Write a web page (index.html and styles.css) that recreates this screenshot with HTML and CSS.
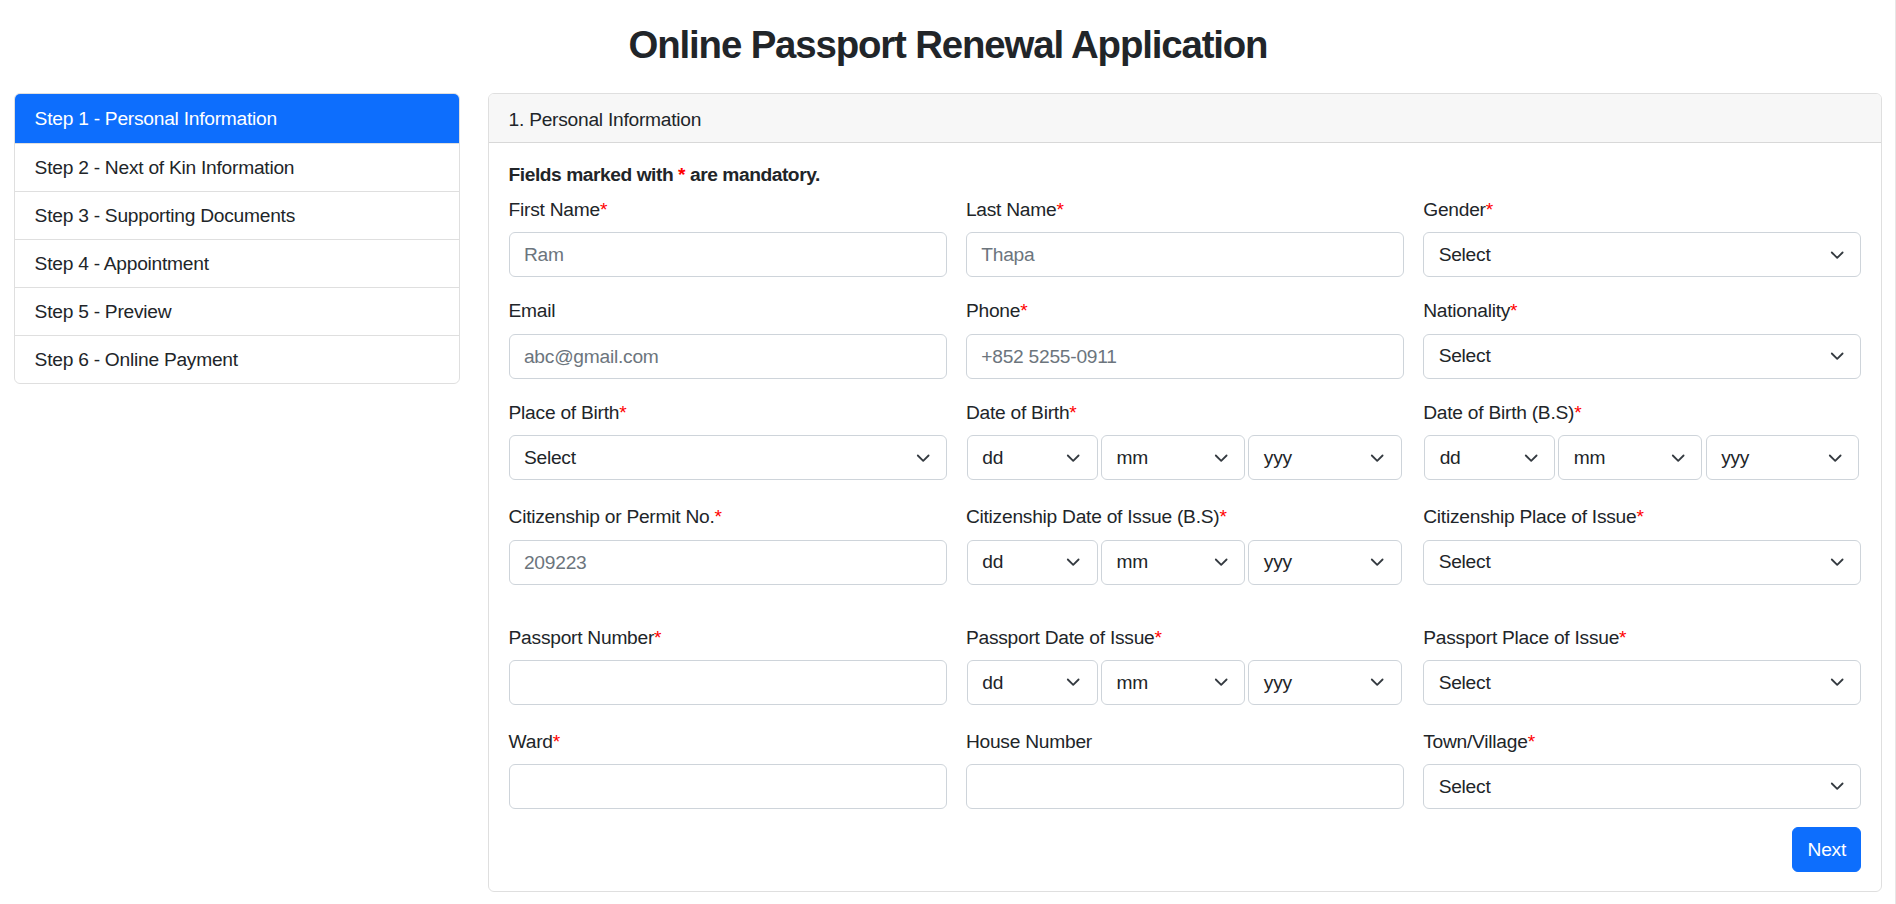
FILE: index.html
```html
<!DOCTYPE html>
<html lang="en">
<head>
<meta charset="utf-8">
<title>Online Passport Renewal Application</title>
<link rel="stylesheet" href="styles.css">
</head>
<body>
<h1 class="page-title">Online Passport Renewal Application</h1>
<div class="layout">
  <aside class="steps">
    <div class="step active">Step 1 - Personal Information</div>
    <div class="step">Step 2 - Next of Kin Information</div>
    <div class="step">Step 3 - Supporting Documents</div>
    <div class="step">Step 4 - Appointment</div>
    <div class="step">Step 5 - Preview</div>
    <div class="step">Step 6 - Online Payment</div>
  </aside>
  <main class="card">
    <div class="card-header">1. Personal Information</div>
    <div class="card-body">
      <p class="note">Fields marked with <span class="req">*</span> are mandatory.</p>

      <div class="form-row">
        <div class="field"><label>First Name<span class="req">*</span></label><input class="control" placeholder="Ram"></div>
        <div class="field"><label>Last Name<span class="req">*</span></label><input class="control" placeholder="Thapa"></div>
        <div class="field"><label>Gender<span class="req">*</span></label>
          <div class="select"><span>Select</span><svg class="chev" viewBox="0 0 16 16"><path d="M2 5l6 6 6-6"/></svg></div>
        </div>
      </div>

      <div class="form-row row2">
        <div class="field"><label>Email</label><input class="control" placeholder="abc@gmail.com"></div>
        <div class="field"><label>Phone<span class="req">*</span></label><input class="control" placeholder="+852 5255-0911"></div>
        <div class="field"><label>Nationality<span class="req">*</span></label>
          <div class="select"><span>Select</span><svg class="chev" viewBox="0 0 16 16"><path d="M2 5l6 6 6-6"/></svg></div>
        </div>
      </div>

      <div class="form-row row3">
        <div class="field"><label>Place of Birth<span class="req">*</span></label>
          <div class="select"><span>Select</span><svg class="chev" viewBox="0 0 16 16"><path d="M2 5l6 6 6-6"/></svg></div>
        </div>
        <div class="field"><label>Date of Birth<span class="req">*</span></label>
          <div class="date-group">
            <div class="select dd"><span>dd</span><svg class="chev" viewBox="0 0 16 16"><path d="M2 5l6 6 6-6"/></svg></div>
            <div class="select mm"><span>mm</span><svg class="chev" viewBox="0 0 16 16"><path d="M2 5l6 6 6-6"/></svg></div>
            <div class="select yy"><span>yyy</span><svg class="chev" viewBox="0 0 16 16"><path d="M2 5l6 6 6-6"/></svg></div>
          </div>
        </div>
        <div class="field"><label>Date of Birth (B.S)<span class="req">*</span></label>
          <div class="date-group">
            <div class="select dd"><span>dd</span><svg class="chev" viewBox="0 0 16 16"><path d="M2 5l6 6 6-6"/></svg></div>
            <div class="select mm"><span>mm</span><svg class="chev" viewBox="0 0 16 16"><path d="M2 5l6 6 6-6"/></svg></div>
            <div class="select yy"><span>yyy</span><svg class="chev" viewBox="0 0 16 16"><path d="M2 5l6 6 6-6"/></svg></div>
          </div>
        </div>
      </div>

      <div class="form-row row4">
        <div class="field"><label>Citizenship or Permit No.<span class="req">*</span></label><input class="control" placeholder="209223"></div>
        <div class="field"><label>Citizenship Date of Issue (B.S)<span class="req">*</span></label>
          <div class="date-group">
            <div class="select dd"><span>dd</span><svg class="chev" viewBox="0 0 16 16"><path d="M2 5l6 6 6-6"/></svg></div>
            <div class="select mm"><span>mm</span><svg class="chev" viewBox="0 0 16 16"><path d="M2 5l6 6 6-6"/></svg></div>
            <div class="select yy"><span>yyy</span><svg class="chev" viewBox="0 0 16 16"><path d="M2 5l6 6 6-6"/></svg></div>
          </div>
        </div>
        <div class="field"><label>Citizenship Place of Issue<span class="req">*</span></label>
          <div class="select"><span>Select</span><svg class="chev" viewBox="0 0 16 16"><path d="M2 5l6 6 6-6"/></svg></div>
        </div>
      </div>

      <div class="form-row row5">
        <div class="field"><label>Passport Number<span class="req">*</span></label><input class="control"></div>
        <div class="field"><label>Passport Date of Issue<span class="req">*</span></label>
          <div class="date-group">
            <div class="select dd"><span>dd</span><svg class="chev" viewBox="0 0 16 16"><path d="M2 5l6 6 6-6"/></svg></div>
            <div class="select mm"><span>mm</span><svg class="chev" viewBox="0 0 16 16"><path d="M2 5l6 6 6-6"/></svg></div>
            <div class="select yy"><span>yyy</span><svg class="chev" viewBox="0 0 16 16"><path d="M2 5l6 6 6-6"/></svg></div>
          </div>
        </div>
        <div class="field"><label>Passport Place of Issue<span class="req">*</span></label>
          <div class="select"><span>Select</span><svg class="chev" viewBox="0 0 16 16"><path d="M2 5l6 6 6-6"/></svg></div>
        </div>
      </div>

      <div class="form-row row6">
        <div class="field"><label>Ward<span class="req">*</span></label><input class="control"></div>
        <div class="field"><label>House Number</label><input class="control"></div>
        <div class="field"><label>Town/Village<span class="req">*</span></label>
          <div class="select"><span>Select</span><svg class="chev" viewBox="0 0 16 16"><path d="M2 5l6 6 6-6"/></svg></div>
        </div>
      </div>

      <div class="actions"><button class="btn-next" type="button">Next</button></div>
    </div>
  </main>
</div>
</body>
</html>
```

FILE: styles.css
```css
* { box-sizing: border-box; }

html, body { margin: 0; padding: 0; }

body {
  font-family: "Liberation Sans", Arial, sans-serif;
  font-size: 19.2px;
  line-height: 28.8px;
  color: #212529;
  background: #fff;
  letter-spacing: -0.25px;
  min-height: 100vh;
  box-shadow: inset -1px 0 0 #e6e6e6;
}

.page-title {
  margin: 22.9px 0 27.2px;
  font-size: 38.4px;
  line-height: 43.2px;
  font-weight: 700;
  letter-spacing: -1.15px;
  text-align: center;
}

.layout {
  display: flex;
  align-items: flex-start;
  gap: 28.8px;
  padding: 0 14.4px;
}

/* sidebar steps */
.steps {
  flex: 0 0 445.2px;
  border: 1px solid rgba(0, 0, 0, 0.125);
  border-radius: 6px;
  overflow: hidden;
  display: flex;
  flex-direction: column;
}

.step {
  padding: 10.3px 19.2px 8px;
  border-top: 1px solid rgba(0, 0, 0, 0.125);
  white-space: nowrap;
}

.step.active {
  margin: -1px -1px 0;
  padding: 11.6px 20.2px 9px;
  border-top: 0;
  background: #0d6efd;
  color: #fff;
  border-radius: 6px 6px 0 0;
}

/* card */
.card {
  flex: 1 1 auto;
  border: 1px solid rgba(0, 0, 0, 0.125);
  border-radius: 6px;
  overflow: hidden;
}

.card-header {
  background: #f7f7f7;
  padding: 11.3px 19.2px 7.6px;
  border-bottom: 1px solid rgba(0, 0, 0, 0.125);
}

.card-body {
  padding: 19.2px;
}

.note {
  margin: 0 0 8px;
  padding-top: 0.8px;
  font-weight: 700;
  line-height: 24px;
  letter-spacing: -0.45px;
}

.req { color: #ff0000; }

.form-row {
  display: grid;
  grid-template-columns: repeat(3, 1fr);
  column-gap: 19.2px;
}

.row2 { margin-top: 19px; }
.row3 { margin-top: 19.5px; }
.row4 { margin-top: 22px; }
.row5 { margin-top: 37.8px; }
.row6 { margin-top: 22.2px; }

.field label {
  display: block;
  padding-top: 1.2px;
  margin-bottom: 7.3px;
  white-space: nowrap;
}

.control,
.select {
  display: flex;
  align-items: center;
  width: 100%;
  height: 45px;
  border: 1px solid #ced4da;
  border-radius: 6px;
  background: #fff;
  font-family: "Liberation Sans", Arial, sans-serif;
  font-size: 19.2px;
  letter-spacing: -0.25px;
  color: #212529;
}

.control {
  padding: 1.5px 14.4px 0;
  outline: none;
}

.control::placeholder { color: #6c757d; opacity: 1; }

.select {
  justify-content: space-between;
  padding: 1.5px 15.8px 0 14.4px;
}

.chev {
  flex: none;
  width: 14.4px;
  height: 14.4px;
  margin-top: -1.5px;
  fill: none;
  stroke: #343a40;
  stroke-width: 2;
  stroke-linecap: round;
  stroke-linejoin: round;
}

.date-group {
  display: flex;
  gap: 3.4px;
  margin: 1px 2.4px 0 1px;
}

.date-group .select { width: auto; min-width: 0; }
.date-group .dd { flex: 127 1 0; }
.date-group .mm { flex: 144 1 0; }
.date-group .yy { flex: 156 1 0; }

.actions {
  display: flex;
  justify-content: flex-end;
  margin-top: 17.6px;
}

.btn-next {
  height: 45px;
  padding: 1.5px 14.4px 0;
  border: 1px solid #0d6efd;
  border-radius: 6px;
  background: #0d6efd;
  color: #fff;
  font-family: "Liberation Sans", Arial, sans-serif;
  font-size: 19.2px;
  letter-spacing: -0.25px;
  cursor: pointer;
}
```
